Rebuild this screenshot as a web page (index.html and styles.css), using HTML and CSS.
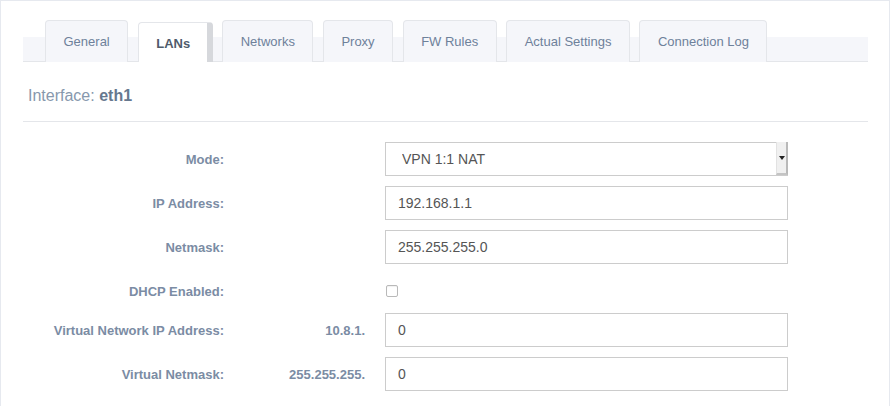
FILE: index.html
```html
<!DOCTYPE html>
<html>
<head>
<meta charset="utf-8">
<link rel="stylesheet" href="styles.css">
</head>
<body>
<div class="panel">
  <nav class="tabs">
    <a class="tab">General</a>
    <a class="tab active">LANs</a>
    <a class="tab">Networks</a>
    <a class="tab">Proxy</a>
    <a class="tab">FW Rules</a>
    <a class="tab">Actual Settings</a>
    <a class="tab">Connection Log</a>
  </nav>
  <h3 class="heading">Interface: <b>eth1</b></h3>
  <form class="form">
    <div class="row">
      <label class="label">Mode:</label>
      <span class="prefix"></span>
      <div class="select-wrap">
        <select class="control select"><option>VPN 1:1 NAT</option></select>
        <span class="arrow"><svg width="6" height="4" viewBox="0 0 6 4"><path d="M0 0H6L3 4Z" fill="#222"/></svg></span>
      </div>
    </div>
    <div class="row">
      <label class="label">IP Address:</label>
      <span class="prefix"></span>
      <input class="control" type="text" value="192.168.1.1">
    </div>
    <div class="row">
      <label class="label">Netmask:</label>
      <span class="prefix"></span>
      <input class="control" type="text" value="255.255.255.0">
    </div>
    <div class="row row-check">
      <label class="label">DHCP Enabled:</label>
      <span class="prefix"></span>
      <span class="check-cell"><span class="checkbox"></span></span>
    </div>
    <div class="row">
      <label class="label">Virtual Network IP Address:</label>
      <span class="prefix">10.8.1.</span>
      <input class="control" type="text" value="0">
    </div>
    <div class="row">
      <label class="label">Virtual Netmask:</label>
      <span class="prefix">255.255.255.</span>
      <input class="control" type="text" value="0">
    </div>
  </form>
</div>
</body>
</html>
```
FILE: styles.css
```css
html, body {
  margin: 0;
  padding: 0;
  background: #ffffff;
  overflow: hidden;
}
body {
  font-family: "Liberation Sans", Arial, sans-serif;
}
.panel {
  width: 845px;
  height: 386px;
  border: 1px solid #e6e9ef;
  border-bottom: none;
  padding: 19px 21px 0 22px;
  overflow: hidden;
}
.tabs {
  display: flex;
  align-items: flex-end;
  gap: 9.5px;
  height: 41px;
  padding-left: 22px;
  border-bottom: 1px solid #e4e6ea;
  background: linear-gradient(to bottom, transparent 17px, #f5f6fa 17px);
}
.tab {
  box-sizing: border-box;
  height: 42px;
  margin-bottom: -1px;
  padding: 0 17.5px;
  display: flex;
  align-items: center;
  font-size: 13px;
  color: #6e819a;
  background: #f5f6fa;
  border: 1px solid #e4e6ea;
  border-bottom: none;
  border-radius: 4px 4px 0 0;
  cursor: pointer;
}
.tab.active {
  height: 40px;
  padding: 2px 16.5px 0 17.5px;
  font-weight: bold;
  color: #4f5b6b;
  background: #ffffff;
  border-right: 6px solid #d6d8dc;
}
.heading {
  box-sizing: border-box;
  margin: 0;
  height: 60px;
  padding: 9px 0 0 5px;
  display: flex;
  align-items: center;
  font-size: 16px;
  font-weight: normal;
  color: #8798ad;
  border-bottom: 1px solid #e4e6ea;
  white-space: pre;
}
.heading b {
  color: #66788e;
  font-weight: bold;
}
.form {
  padding-top: 20px;
}
.row {
  display: grid;
  grid-template-columns: 201px 121px 403px;
  column-gap: 20px;
  height: 34px;
  margin-bottom: 10px;
  align-items: center;
}
.row-check {
  height: 24px;
  padding-top: 5px;
}
.label, .prefix {
  text-align: right;
  font-size: 13px;
  font-weight: bold;
  color: #7b8ca4;
}
.control {
  box-sizing: border-box;
  width: 403px;
  height: 34px;
  margin: 0;
  padding: 0 12px;
  border: 1px solid #cccccc;
  border-radius: 0;
  background: #ffffff;
  font-family: "Liberation Sans", Arial, sans-serif;
  font-size: 14px;
  color: #555555;
  outline: none;
}
.select-wrap {
  position: relative;
  height: 34px;
}
.select {
  -webkit-appearance: none;
  appearance: none;
  padding-left: 16px;
}
.arrow {
  position: absolute;
  right: 0;
  top: 0;
  width: 12px;
  height: 33px;
  box-sizing: border-box;
  background: #f0f0f0;
  border-left: 1px solid #e2e2e2;
  border-right: 2px solid #b9b9b9;
  border-bottom: 2px solid #c4c4c4;
  display: flex;
  align-items: center;
  justify-content: center;
}
.arrow svg {
  display: block;
}
.check-cell {
  display: flex;
  align-items: center;
  padding-left: 1px;
}
.checkbox {
  box-sizing: border-box;
  width: 12px;
  height: 12px;
  border: 1px solid #b9b9b9;
  border-radius: 2px;
  background: #ffffff;
  box-shadow: inset 0 1px 1px rgba(0,0,0,0.06);
}
```
